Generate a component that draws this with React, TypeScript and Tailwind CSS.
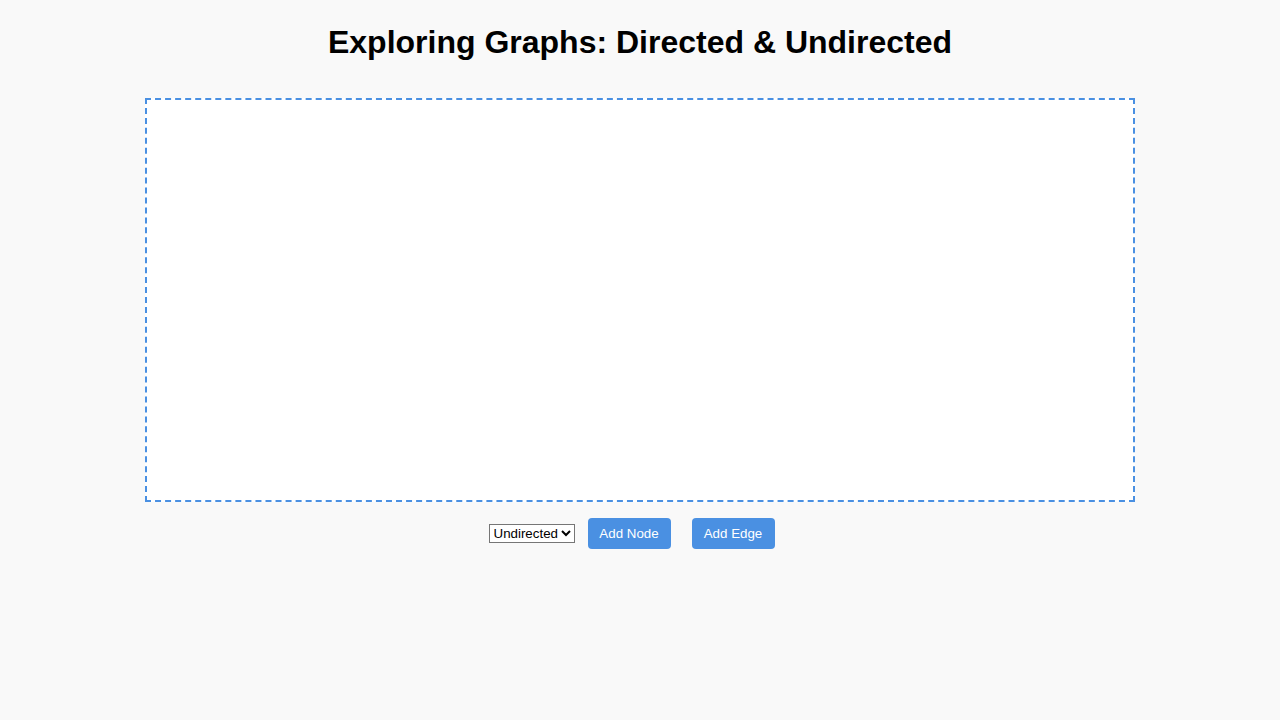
import React, { useState } from 'react';

export default function App() {
  const [mode, setMode] = useState('undirected');

  return (
    <div className="min-h-[720px] w-full bg-[#f9f9f9] font-['Liberation_Sans',Arial,sans-serif] text-black">
      <h1 className="pt-[24px] text-center text-[32px] font-bold leading-[37px]">
        Exploring Graphs: Directed &amp; Undirected
      </h1>

      <div className="mt-[37px] flex justify-center">
        <div className="h-[404px] w-[990px] border-2 border-dashed border-[#4a90e2] bg-white"></div>
      </div>

      <div className="mt-[16px] flex items-center justify-center">
        <select
          value={mode}
          onChange={(e) => setMode(e.target.value)}
          className="h-[19px] w-[86px] border border-[#767676] bg-white text-[13.33px] leading-none"
        >
          <option value="undirected">Undirected</option>
          <option value="directed">Directed</option>
        </select>
        <button className="ml-[13px] h-[31px] w-[83px] rounded-[4px] bg-[#4a90e2] text-[13.33px] text-white">
          Add Node
        </button>
        <button className="ml-[21px] mr-[17px] h-[31px] w-[83px] rounded-[4px] bg-[#4a90e2] text-[13.33px] text-white">
          Add Edge
        </button>
      </div>
    </div>
  );
}
